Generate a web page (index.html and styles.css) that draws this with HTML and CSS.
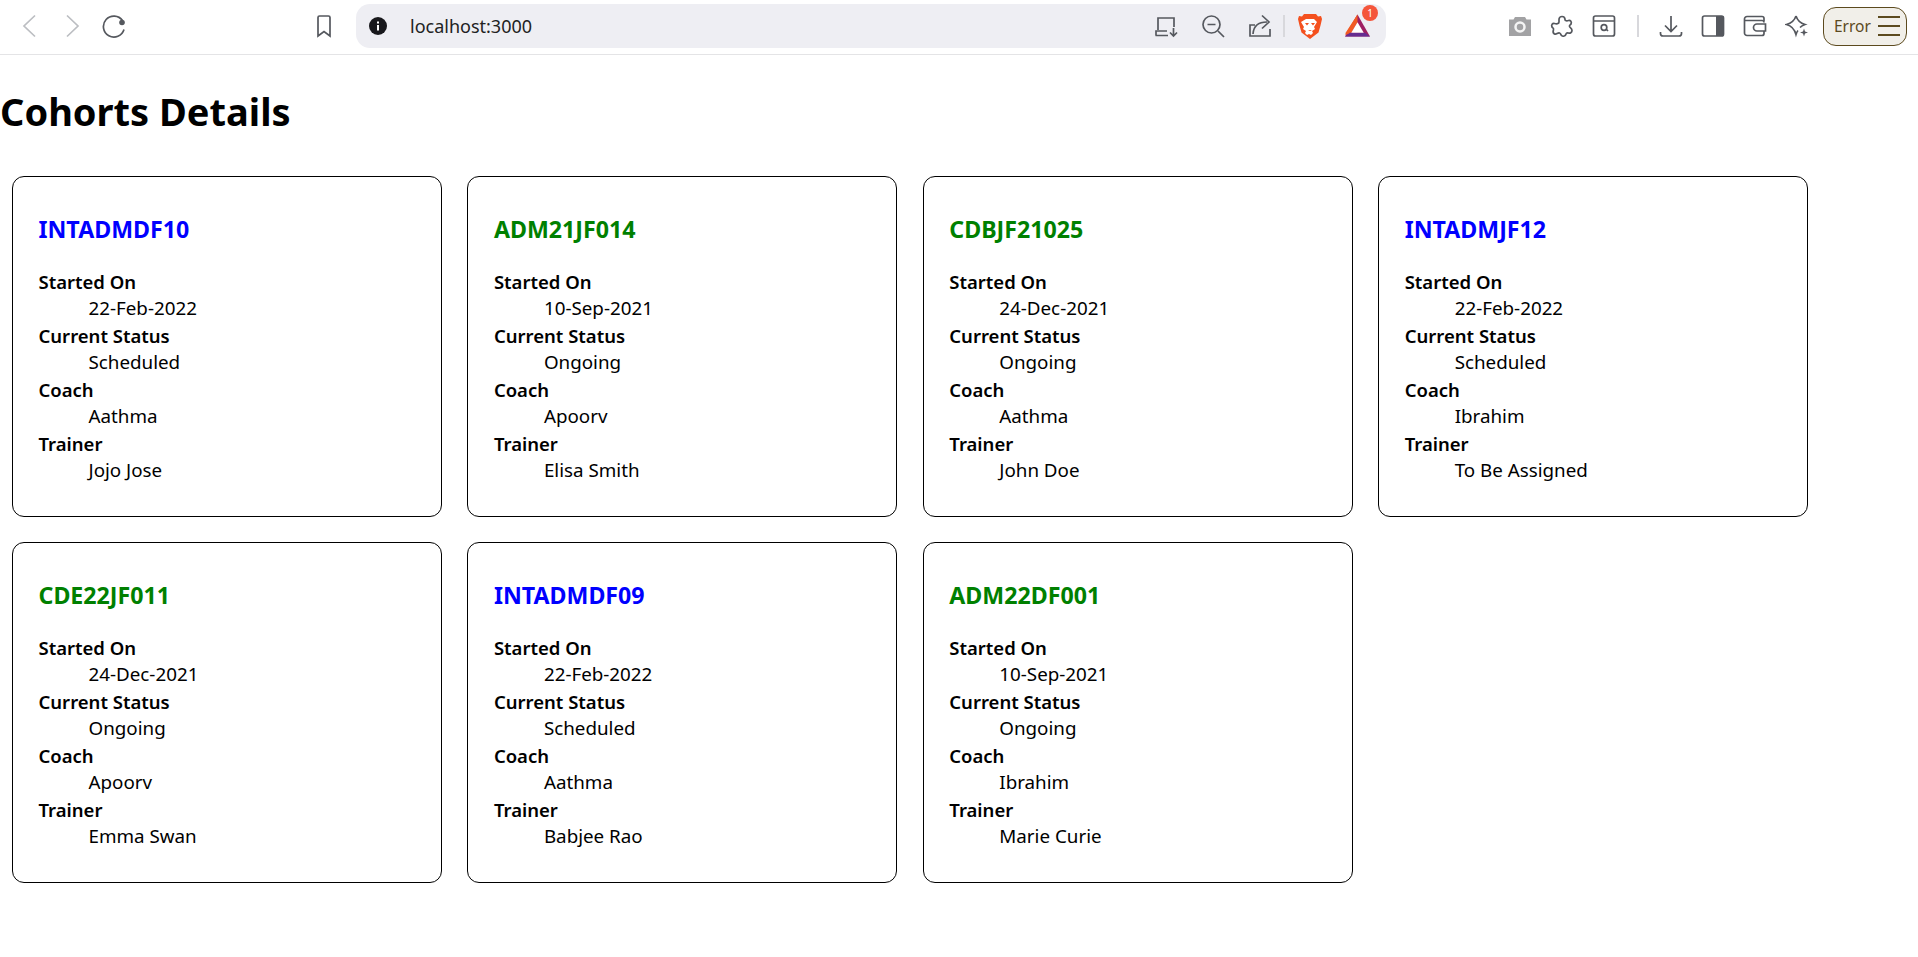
FILE: index.html
```html
<!DOCTYPE html>
<html lang="en">
<head>
  <meta charset="UTF-8">
  <meta name="viewport" content="width=device-width,initial-scale=1">
  <title>Cohorts Details</title>
  <link rel="stylesheet" href="styles.css">
</head>
<body>
<!-- browser toolbar -->
<div class="toolbar">
  <div class="nav">
    <svg class="icon faded" viewBox="0 0 24 24"><path d="M17 1.5 6 12l11 10.500"/></svg>
    <svg class="icon faded" viewBox="0 0 24 24"><path d="M7 1.500 18 12 7 22.500"/></svg>
    <svg class="icon" viewBox="0 0 24 24"><path d="M20.500 6.500A10.500 10.500 0 1 0 22 15.500"/><circle class="solid" cx="20" cy="8.500" r="2.800"/></svg>
  </div>
  <svg class="icon bookmark" viewBox="0 0 24 24"><path d="M6 3.500a1.500 1.500 0 0 1 1.500-1.500h9A1.500 1.500 0 0 1 18 3.500V22l-6-4.500L6 22z"/></svg>
  <div class="address">
    <svg class="info" viewBox="0 0 18 18"><circle cx="9" cy="9" r="9"/><rect x="8" y="8" width="2" height="5.500"/><rect x="8" y="4.500" width="2" height="2"/></svg>
    <span class="url">localhost:3000</span>
    <div class="addr-actions">
      <svg class="icon" viewBox="0 0 24 24"><path d="M4 16V4h16v9M1.500 21.500h12.500M2 21.500V17h11M19.500 14v8M16 18.500l3.500 3.500 3.500-3.500"/></svg>
      <svg class="icon" viewBox="0 0 24 24"><circle cx="10.500" cy="10.500" r="8.500"/><path d="M6.500 10.500h8M17 17l6 6"/></svg>
      <svg class="icon" viewBox="0 0 24 24"><path d="M22 15v7H2V11h5M5 20c.5-8 5-12 14-12M14 1.500l7 6.500-7 6.500"/></svg>
      <span class="sep in-addr"></span>
      <svg class="brave" viewBox="0 0 24 26"><path class="brave-shield" d="M6 1h12l2 2.500 3-.5 1 3-1.500 6.500-2 7L12 26l-8.500-6.500-2-7L0 6l1-3 3 .5z"/><path class="brave-face" d="M8 6h8l3 3-3 5 1 2-3 2 1 2-2 2-2-1-2 1-2-2 1-2-3-2 1-2-3-5z"/><path class="brave-shield" d="M7 10h4l-2 2.500zM13 10h4l-2 2.500zM12 12v5l-2 1h4l-2-1z"/></svg>
      <div class="bat">
        <svg viewBox="0 0 26 24"><path class="bat-right" d="M13 0l13 23H0z"/><path class="bat-left" d="M13 0 0 20l2-1 8-7z"/><path class="bat-left" d="M13 0 0 21l6-1 7-12z"/><path class="bat-bottom" d="M0 23h26l-5-4H5z"/><path class="bat-mid" d="M13 8l6.500 11h-13z"/></svg>
        <span class="badge">1</span>
      </div>
    </div>
  </div>
  <div class="tools">
    <svg class="icon camera" viewBox="0 0 24 24"><path d="M7 3h10l1.500 2.500H23V22H1V5.500h4.500z"/><circle class="lens" cx="12" cy="13" r="4.500"/></svg>
    <svg class="icon" viewBox="0 0 24 24"><path d="M9 5.500a3 3 0 0 1 6 0c0 1.500 2 1.500 3.500 1 2-.5 3.500 1.500 2.500 3.500-.5 1-2 1.500-1.500 2.500.5 1.500 2.500 1.500 2.500 4 0 2-2 3-3.500 2.500-1.500-.5-2-.5-2.500 1-.5 2-3 3-4.500 1.500-1-1-.5-2-2-2.500-2-.5-3 2-5 1-2-1-1.500-3-1-4.500.5-1-1-1.500-1.500-2.500-1-2 .5-4 2.500-3.500 2 .5 4.500.5 4.500-1.500z"/></svg>
    <svg class="icon" viewBox="0 0 24 24"><rect x="1.500" y="2" width="21" height="20" rx="2"/><path d="M1.500 7h21M16 17l-1.500-1.500"/><circle cx="12" cy="13.500" r="2.800"/></svg>
    <span class="sep tools-sep"></span>
    <svg class="icon" viewBox="0 0 24 24"><path d="M12 2v15M6 11.500l6 6 6-6M1.500 18v1.500a2.500 2.500 0 0 0 2.500 2.500h16a2.500 2.500 0 0 0 2.500-2.500V18"/></svg>
    <svg class="icon" viewBox="0 0 24 24"><rect x="1.500" y="2" width="21" height="20" rx="2"/><rect class="solid" x="15" y="2" width="7.500" height="20"/></svg>
    <svg class="icon" viewBox="0 0 24 24"><path d="M21 7V4.500A2 2 0 0 0 19 2.500H4A2.500 2.500 0 0 0 1.500 5v14A2.500 2.500 0 0 0 4 21.500h15a2 2 0 0 0 2-2V17M1.500 6.500H19a2 2 0 0 1 2 2M14 10h8.500v7H14a3.500 3.500 0 0 1 0-7z"/></svg>
    <svg class="icon" viewBox="0 0 24 24"><path d="M11 2c1.500 4.500 3.500 7 9 8.500-2.500 1-4 2-5 3M11 2C9.500 6.500 7 9 1.500 10.500 7 12 9.500 15 11 20.500c.5-1.500 1-3 2-4"/><path class="solid" d="M19 14.500l1 3 3 1-3 1-1 3-1-3-3-1 3-1z"/></svg>
    <div class="error-btn">
      <span>Error</span>
      <span class="burger"><i></i><i></i><i></i></span>
    </div>
  </div>
</div>

<h1>Cohorts Details</h1>

<div class="cards">
  <div class="card">
    <h3 class="blue">INTADMDF10</h3>
    <dl>
      <dt>Started On</dt><dd>22-Feb-2022</dd>
      <dt>Current Status</dt><dd>Scheduled</dd>
      <dt>Coach</dt><dd>Aathma</dd>
      <dt>Trainer</dt><dd>Jojo Jose</dd>
    </dl>
  </div>
  <div class="card">
    <h3 class="green">ADM21JF014</h3>
    <dl>
      <dt>Started On</dt><dd>10-Sep-2021</dd>
      <dt>Current Status</dt><dd>Ongoing</dd>
      <dt>Coach</dt><dd>Apoorv</dd>
      <dt>Trainer</dt><dd>Elisa Smith</dd>
    </dl>
  </div>
  <div class="card">
    <h3 class="green">CDBJF21025</h3>
    <dl>
      <dt>Started On</dt><dd>24-Dec-2021</dd>
      <dt>Current Status</dt><dd>Ongoing</dd>
      <dt>Coach</dt><dd>Aathma</dd>
      <dt>Trainer</dt><dd>John Doe</dd>
    </dl>
  </div>
  <div class="card">
    <h3 class="blue">INTADMJF12</h3>
    <dl>
      <dt>Started On</dt><dd>22-Feb-2022</dd>
      <dt>Current Status</dt><dd>Scheduled</dd>
      <dt>Coach</dt><dd>Ibrahim</dd>
      <dt>Trainer</dt><dd>To Be Assigned</dd>
    </dl>
  </div>
  <div class="card">
    <h3 class="green">CDE22JF011</h3>
    <dl>
      <dt>Started On</dt><dd>24-Dec-2021</dd>
      <dt>Current Status</dt><dd>Ongoing</dd>
      <dt>Coach</dt><dd>Apoorv</dd>
      <dt>Trainer</dt><dd>Emma Swan</dd>
    </dl>
  </div>
  <div class="card">
    <h3 class="blue">INTADMDF09</h3>
    <dl>
      <dt>Started On</dt><dd>22-Feb-2022</dd>
      <dt>Current Status</dt><dd>Scheduled</dd>
      <dt>Coach</dt><dd>Aathma</dd>
      <dt>Trainer</dt><dd>Babjee Rao</dd>
    </dl>
  </div>
  <div class="card">
    <h3 class="green">ADM22DF001</h3>
    <dl>
      <dt>Started On</dt><dd>10-Sep-2021</dd>
      <dt>Current Status</dt><dd>Ongoing</dd>
      <dt>Coach</dt><dd>Ibrahim</dd>
      <dt>Trainer</dt><dd>Marie Curie</dd>
    </dl>
  </div>
</div>
</body>
</html>
```

FILE: styles.css
```css
* { box-sizing: border-box; margin: 0; padding: 0 }
body { font-family: "Noto Sans", sans-serif; background: #fff; color: #000 }

.toolbar {
  display: flex;
  align-items: center;
  height: 55px;
  padding-left: 18px;
  padding-bottom: 2px;
  border-bottom: 1px solid #e4e4e6;
}
.nav { display: flex; gap: 18px }
.icon {
  width: 24px;
  height: 24px;
  flex: none;
  fill: none;
  stroke: #55585e;
  stroke-width: 1.7;
}
.icon .solid { fill: #55585e; stroke: none }
.faded { stroke: #bcbec2 }
.bookmark { margin-left: 186px; margin-right: 20px; height: 28px }

.address {
  display: flex;
  align-items: center;
  width: 1030px;
  height: 44px;
  padding: 0 16px 0 13px;
  border-radius: 14px;
  background: #eeeef3;
}
.info { width: 18px; height: 18px; fill: #18181c }
.info rect { fill: #fff }
.url { margin-left: 23px; font-size: 18px; color: #222 }
.addr-actions { display: flex; align-items: center; gap: 23px; margin-left: auto }
.sep { width: 2px; height: 22px; background: #d8d8dc; flex: none }
.in-addr { margin: 0 -10px 0 -12px }
.tools-sep { margin: 0 2px 0 3px }
.brave { width: 24px; height: 26px }
.brave-shield { fill: #f4501e }
.brave-face { fill: #fff }
.bat { position: relative; width: 25px; height: 24px }
.bat svg { width: 25px; height: 24px; display: block }
.bat-left { fill: #f15a24 }
.bat-right { fill: #9e1f63 }
.bat-bottom { fill: #662d91 }
.bat-mid { fill: #fff }
.badge {
  position: absolute;
  top: -9px;
  right: -8px;
  width: 16px;
  height: 16px;
  border-radius: 50%;
  background: #f4553a;
  color: #fff;
  font-size: 10px;
  line-height: 16px;
  text-align: center;
}

.tools { display: flex; align-items: center; gap: 18px; margin-left: 122px }
.camera { fill: #a2a2a4; stroke: none }
.camera .lens { fill: #a2a2a4; stroke: #f4f4f4; stroke-width: 2.500 }
.error-btn {
  display: flex;
  align-items: center;
  justify-content: space-between;
  width: 84px;
  height: 39px;
  margin-left: -4px;
  padding: 0 6px 0 10px;
  border: 1.500px solid #5c4a1e;
  border-radius: 13px;
  background: #f1efe9;
  color: #5c4a1e;
  font-size: 15.500px;
}
.burger { display: flex; flex-direction: column; gap: 7px; width: 22px }
.burger i { display: block; height: 2px; background: #5c4a1e }

h1 {
  margin: 30px 0 38px;
  font-size: 38px;
  line-height: 53px;
  font-weight: 700;
}

.cards {
  display: grid;
  grid-template-columns: repeat(4, 430px);
  gap: 25px 25.400px;
  padding-left: 12px;
}
.card {
  height: 341px;
  padding: 37px 25.500px 0;
  border: 1px solid #000;
  border-radius: 12px;
}
.card h3 {
  margin-bottom: 23px;
  font-size: 23.200px;
  line-height: 31px;
  font-weight: 700;
}
.blue { color: #00f }
.green { color: #008000 }
dl { font-size: 18.500px; line-height: 27px }
dt { font-weight: 600 }
dd { margin-left: 50px; font-size: 18.800px }
```
